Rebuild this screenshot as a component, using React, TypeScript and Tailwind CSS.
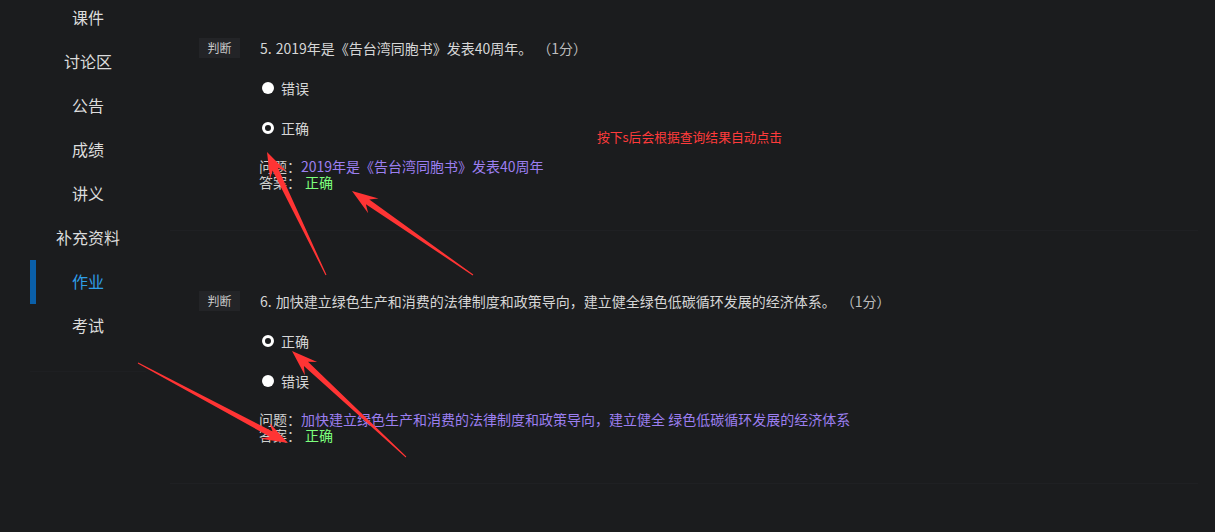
import type { ReactNode } from 'react'

const menu = ['课件', '讨论区', '公告', '成绩', '讲义', '补充资料', '作业', '考试']

type Option = { label: string; checked: boolean }

interface Question {
  no: string
  title: string
  options: Option[]
  query: string
  answer: string
  top: string
}

const questions: Question[] = [
  {
    no: '5.',
    title: '2019年是《告台湾同胞书》发表40周年。',
    options: [
      { label: '错误', checked: false },
      { label: '正确', checked: true },
    ],
    query: '2019年是《告台湾同胞书》发表40周年',
    answer: '正确',
    top: 'pt-[38px]',
  },
  {
    no: '6.',
    title: '加快建立绿色生产和消费的法律制度和政策导向，建立健全绿色低碳循环发展的经济体系。',
    options: [
      { label: '正确', checked: true },
      { label: '错误', checked: false },
    ],
    query: '加快建立绿色生产和消费的法律制度和政策导向，建立健全 绿色低碳循环发展的经济体系',
    answer: '正确',
    top: 'pt-[60px]',
  },
]

// tapered red annotation arrow, tail -> tip
function arrowPoints(x1: number, y1: number, x2: number, y2: number) {
  const dx = x2 - x1
  const dy = y2 - y1
  const len = Math.hypot(dx, dy)
  const ux = dx / len
  const uy = dy / len
  const nx = -uy
  const ny = ux
  const at = (d: number, w: number) =>
    `${(x1 + ux * d + nx * w).toFixed(1)},${(y1 + uy * d + ny * w).toFixed(1)}`
  return [
    at(0, 0.5),
    at(len - 19, 3),
    at(len - 26, 9),
    at(len, 0),
    at(len - 26, -9),
    at(len - 19, -3),
    at(0, -0.5),
  ].join(' ')
}

const arrows: [number, number, number, number][] = [
  [326, 275, 267, 152],
  [473, 275, 352, 191],
  [138, 363, 288, 443],
  [406, 457, 292, 351],
]

function Radio({ checked }: { checked: boolean }) {
  return checked ? (
    <span className="w-3 h-3 rounded-full border-[3px] border-white bg-[#1b1c1e] flex-shrink-0" />
  ) : (
    <span className="w-3 h-3 rounded-full bg-white flex-shrink-0" />
  )
}

function InfoLine({ label, children }: { label: string; children: ReactNode }) {
  return (
    <div className="flex h-4 items-center text-[14px] leading-4 text-[#cfcfcf] whitespace-nowrap">
      <span>{label}</span>
      {children}
    </div>
  )
}

function QuestionBlock({ q }: { q: Question }) {
  return (
    <div className={`${q.top} pb-[40px] pl-[29px] border-b border-[#1f2023]`}>
      <div className="flex items-center gap-5 h-5">
        <span className="w-[41px] h-5 flex items-center justify-center bg-[#232427] text-[12px] text-[#c9c9c9]">
          判断
        </span>
        <span className="text-[14px] text-[#d6d6d6] whitespace-nowrap">
          {q.no}
          <span className="ml-1">{q.title}</span>
          <span className="ml-3 text-[#bdbdbd]">（1分）</span>
        </span>
      </div>
      <div className="pl-[63px] mt-[10px]">
        {q.options.map((o) => (
          <div key={o.label} className="flex items-center gap-[7px] h-10 text-[14px] text-[#d6d6d6]">
            <Radio checked={o.checked} />
            <span>{o.label}</span>
          </div>
        ))}
      </div>
      <div className="pl-[60px] mt-[10px]">
        <InfoLine label="问题：">
          <span className="text-[#9c7ff0]">{q.query}</span>
        </InfoLine>
        <InfoLine label="答案：">
          <span className="ml-1 text-[#7dff7d]">{q.answer}</span>
        </InfoLine>
      </div>
    </div>
  )
}

export default function App() {
  return (
    <div
      className="relative w-[1215px] h-[532px] overflow-hidden bg-[#1b1c1e] flex"
      style={{ fontFamily: '"Noto Sans CJK SC", "Noto Sans", sans-serif' }}
    >
      <nav className="ml-[30px] w-[116px] h-[377px] -mt-[5px] border-b border-[#1e1f22] flex flex-col">
        {menu.map((item) => {
          const active = item === '作业'
          return (
            <div
              key={item}
              className={`relative h-11 flex items-center justify-center text-[16px] ${
                active ? 'text-[#2f9ee8]' : 'text-[#dcdcdc]'
              }`}
            >
              {active && <span className="absolute left-0 top-[1px] w-[6px] h-11 bg-[#0a5fa9]" />}
              {item}
            </div>
          )
        })}
      </nav>

      <main className="ml-6 w-[1028px]">
        {questions.map((q) => (
          <QuestionBlock key={q.no} q={q} />
        ))}
      </main>

      <div className="absolute left-[597px] top-[128px] text-[12.8px] leading-[18px] text-[#ff3b3b]">
        按下s后会根据查询结果自动点击
      </div>

      <svg className="absolute inset-0 pointer-events-none" width="1215" height="532">
        {arrows.map(([x1, y1, x2, y2], i) => (
          <polygon key={i} points={arrowPoints(x1, y1, x2, y2)} fill="#ff3434" />
        ))}
      </svg>
    </div>
  )
}
